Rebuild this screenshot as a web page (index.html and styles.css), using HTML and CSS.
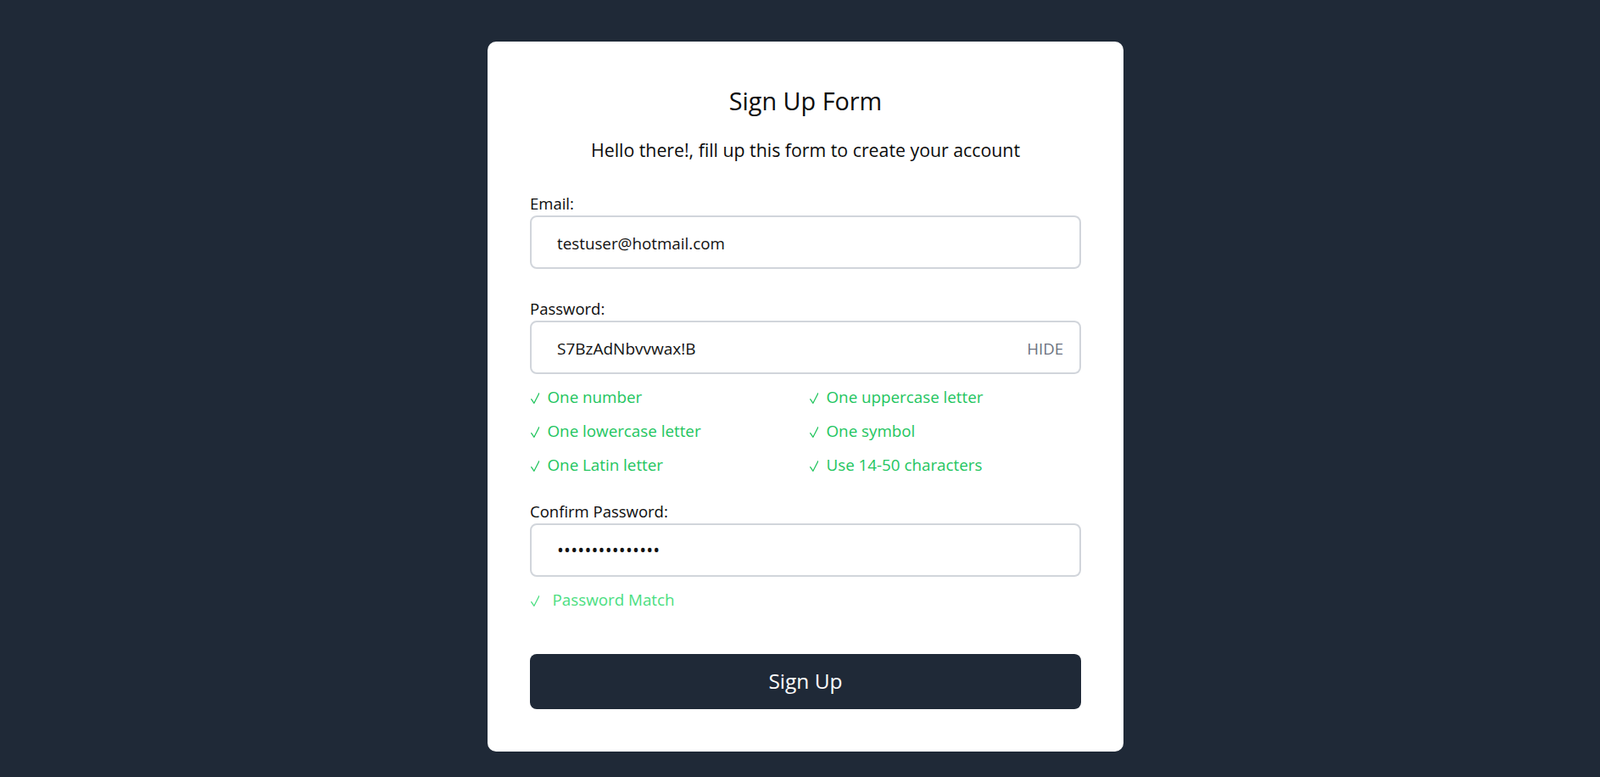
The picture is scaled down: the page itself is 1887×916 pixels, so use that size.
FILE: index.html
```html
<!DOCTYPE html>
<html lang="en">
<head>
<meta charset="utf-8">
<title>Sign Up Form</title>
<link rel="stylesheet" href="styles.css">
</head>
<body>
<main class="page">
  <form class="card">
    <h1 class="title">Sign Up Form</h1>
    <p class="subtitle">Hello there!, fill up this form to create your account</p>

    <div class="field field-first">
      <label class="label" for="email">Email:</label>
      <div class="box">
        <input id="email" class="input input-email" type="email" value="testuser@hotmail.com">
      </div>
    </div>

    <div class="field field-password">
      <label class="label" for="password">Password:</label>
      <div class="box">
        <input id="password" class="input" type="text" value="S7BzAdNbvvwax!B">
        <button type="button" class="toggle">HIDE</button>
      </div>
      <ul class="rules">
        <li class="rule"><svg class="tick" viewBox="0 0 10.5 13" aria-hidden="true"><path d="M0.7 7.6 L3.9 12.3 L9.9 0.6"/></svg>One number</li>
        <li class="rule"><svg class="tick" viewBox="0 0 10.5 13" aria-hidden="true"><path d="M0.7 7.6 L3.9 12.3 L9.9 0.6"/></svg>One uppercase letter</li>
        <li class="rule"><svg class="tick" viewBox="0 0 10.5 13" aria-hidden="true"><path d="M0.7 7.6 L3.9 12.3 L9.9 0.6"/></svg>One lowercase letter</li>
        <li class="rule"><svg class="tick" viewBox="0 0 10.5 13" aria-hidden="true"><path d="M0.7 7.6 L3.9 12.3 L9.9 0.6"/></svg>One symbol</li>
        <li class="rule"><svg class="tick" viewBox="0 0 10.5 13" aria-hidden="true"><path d="M0.7 7.6 L3.9 12.3 L9.9 0.6"/></svg>One Latin letter</li>
        <li class="rule"><svg class="tick" viewBox="0 0 10.5 13" aria-hidden="true"><path d="M0.7 7.6 L3.9 12.3 L9.9 0.6"/></svg>Use 14-50 characters</li>
      </ul>
    </div>

    <div class="field field-confirm">
      <label class="label" for="confirm">Confirm Password:</label>
      <div class="box">
        <input id="confirm" class="input input-secret" type="password" value="S7BzAdNbvvwax!B">
      </div>
      <p class="match"><svg class="tick tick-wide" viewBox="0 0 10.5 13" aria-hidden="true"><path d="M0.7 7.6 L3.9 12.3 L9.9 0.6"/></svg>Password Match</p>
    </div>

    <button type="button" class="submit">Sign Up</button>
  </form>
</main>
</body>
</html>
```

FILE: styles.css
```css
* {
  box-sizing: border-box;
}

html,
body {
  margin: 0;
  padding: 0;
}

body {
  background: #1f2937;
  font-family: "Open Sans", "Noto Sans", sans-serif;
  color: #111111;
  min-height: 100vh;
}

.page {
  display: flex;
  justify-content: center;
  align-items: flex-start;
  padding: 49px 0 0 13px;
}

.card {
  width: 750px;
  background: #ffffff;
  border-radius: 10px;
  padding: 52px 50px 50px;
  display: flex;
  flex-direction: column;
}

.title {
  margin: 0;
  font-size: 28.8px;
  line-height: 36px;
  font-weight: 400;
  text-align: center;
  color: #0b0b0b;
}

.subtitle {
  margin: 26px 0 0;
  font-size: 21.3px;
  line-height: 28px;
  text-align: center;
  color: #0b0b0b;
}

.field {
  display: flex;
  flex-direction: column;
}

.field-first {
  margin-top: 36.5px;
}

.field-password {
  margin-top: 35px;
}

.field-confirm {
  margin-top: 31px;
}

.label {
  font-size: 18.5px;
  line-height: 24px;
  margin-bottom: 2px;
  color: #0b0b0b;
}

.box {
  display: flex;
  align-items: center;
  border: 2px solid #d1d5db;
  border-radius: 8px;
  background: #ffffff;
}

.input {
  flex: 1;
  min-width: 0;
  border: none;
  outline: none;
  background: transparent;
  font-family: "Open Sans", "Noto Sans", sans-serif;
  font-size: 19px;
  line-height: 24px;
  height: 59px;
  padding: 19px 0 16px 30px;
  color: #111111;
}

.input-email {
  font-size: 18.8px;
}

.input-secret {
  font-size: 21px;
  letter-spacing: 0.2px;
  padding: 17px 0 18px 30px;
}

.toggle {
  border: none;
  background: transparent;
  font-family: "Open Sans", "Noto Sans", sans-serif;
  font-size: 18.6px;
  line-height: 24px;
  color: #6b7280;
  padding: 3px 19px 0 10px;
  cursor: pointer;
}

.rules {
  list-style: none;
  margin: 15px 0 0;
  padding: 0;
  display: grid;
  grid-template-columns: 1fr 1fr;
  column-gap: 8px;
  row-gap: 16px;
}

.rule {
  font-size: 18.8px;
  line-height: 24px;
  height: 24px;
  color: #22c55e;
  white-space: nowrap;
}

.tick {
  display: inline-block;
  width: 10.5px;
  height: 13px;
  margin: 0 9.5px 0 0.5px;
  vertical-align: -1px;
  fill: none;
  stroke: currentColor;
  stroke-width: 1.25;
  stroke-linecap: round;
  stroke-linejoin: round;
}

.tick-wide {
  margin-right: 15.5px;
}

.match {
  margin: 15px 0 0;
  font-size: 18.8px;
  line-height: 24px;
  color: #4ade80;
}

.submit {
  margin-top: 52px;
  width: 100%;
  height: 65px;
  border: none;
  border-radius: 8px;
  background: #1f2937;
  color: #ffffff;
  font-family: "Open Sans", "Noto Sans", sans-serif;
  font-size: 24.5px;
  line-height: 32px;
  cursor: pointer;
}
```
